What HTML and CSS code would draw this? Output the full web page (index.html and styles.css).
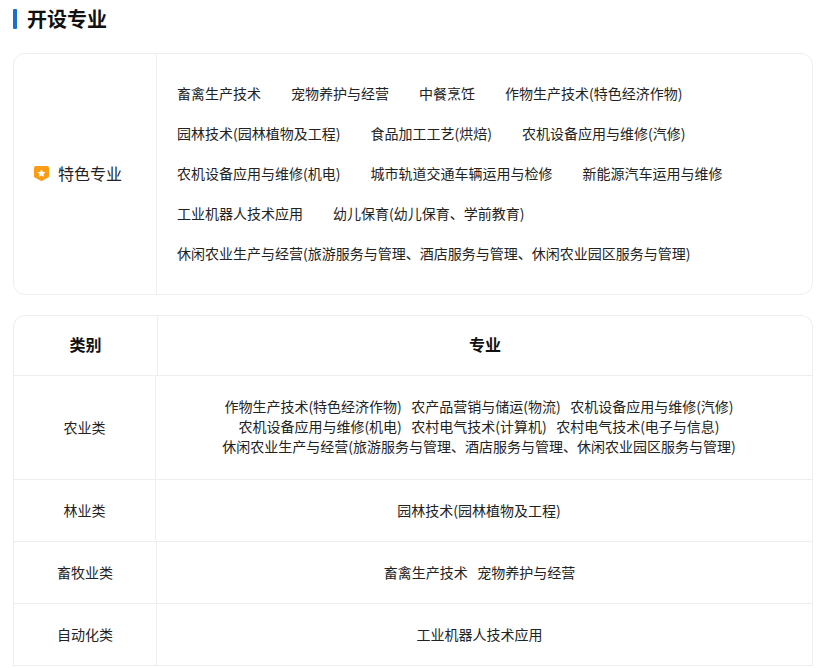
FILE: index.html
```html
<!DOCTYPE html>
<html lang="zh-CN">
<head>
<meta charset="utf-8">
<title>开设专业</title>
<link rel="stylesheet" href="styles.css">
</head>
<body>
<h2 class="title">开设专业</h2>
<section class="feature">
  <div class="feature-label">
    <svg class="badge" width="15" height="15" viewBox="0 0 15 15"><path d="M2 0h11a2 2 0 0 1 2 2v8.500a1 1 0 0 1-.5.850l-6.200 3.400a1.600 1.600 0 0 1-1.600 0L.5 11.350A1 1 0 0 1 0 10.500V2a2 2 0 0 1 2-2z" fill="#fa9d14"/><path d="M7.500 3.200l1.250 2.550 2.800.4-2.050 1.950.5 2.800-2.500-1.350L5 10.900l.5-2.800-2.050-1.950 2.800-.4z" fill="#fff"/></svg>
    <span>特色专业</span>
  </div>
  <div class="feature-list">
    <div class="feature-row"><span>畜禽生产技术</span><span>宠物养护与经营</span><span>中餐烹饪</span><span>作物生产技术(特色经济作物)</span></div>
    <div class="feature-row"><span>园林技术(园林植物及工程)</span><span>食品加工工艺(烘焙)</span><span>农机设备应用与维修(汽修)</span></div>
    <div class="feature-row"><span>农机设备应用与维修(机电)</span><span>城市轨道交通车辆运用与检修</span><span>新能源汽车运用与维修</span></div>
    <div class="feature-row"><span>工业机器人技术应用</span><span>幼儿保育(幼儿保育、学前教育)</span></div>
    <div class="feature-row"><span>休闲农业生产与经营(旅游服务与管理、酒店服务与管理、休闲农业园区服务与管理)</span></div>
  </div>
</section>
<section class="table">
  <div class="row head"><div class="cat">类别</div><div class="majors">专业</div></div>
  <div class="row tall narrow"><div class="cat">农业类</div><div class="majors">
    <div>作物生产技术(特色经济作物)&nbsp;&nbsp;&nbsp;农产品营销与储运(物流)&nbsp;&nbsp;&nbsp;农机设备应用与维修(汽修)</div>
    <div>农机设备应用与维修(机电)&nbsp;&nbsp;&nbsp;农村电气技术(计算机)&nbsp;&nbsp;&nbsp;农村电气技术(电子与信息)</div>
    <div>休闲农业生产与经营(旅游服务与管理、酒店服务与管理、休闲农业园区服务与管理)</div>
  </div></div>
  <div class="row narrow"><div class="cat">林业类</div><div class="majors">园林技术(园林植物及工程)</div></div>
  <div class="row"><div class="cat">畜牧业类</div><div class="majors">畜禽生产技术&nbsp;&nbsp;&nbsp;宠物养护与经营</div></div>
  <div class="row"><div class="cat">自动化类</div><div class="majors">工业机器人技术应用</div></div>
</section>
</body>
</html>
```
FILE: styles.css
```css
* { box-sizing: border-box; }
html, body { overflow: hidden; height: 668px; }
body {
  margin: 0;
  padding: 0 12px 0 13px;
  background: #fff;
  color: #222;
  font-family: "Noto Sans CJK SC", "Liberation Sans", sans-serif;
  font-size: 14px;
}
.title {
  margin: 9px 0 24px;
  height: 20px;
  padding-left: 14px;
  font-size: 20px;
  line-height: 20px;
  font-weight: 700;
  color: #111;
  position: relative;
}
.title::before {
  content: "";
  position: absolute;
  left: 0;
  top: 0;
  width: 4px;
  height: 20px;
  border-radius: 1px;
  background: #1a6fd0;
}
.feature {
  display: flex;
  height: 242px;
  border: 1px solid #eeeeee;
  border-radius: 12px;
}
.feature-label {
  width: 143px;
  flex: none;
  border-right: 1px solid #eeeeee;
  display: flex;
  align-items: center;
  padding: 0 0 2px 20px;
  gap: 9px;
  font-size: 16px;
}
.badge { flex: none; }
.feature-list {
  flex: 1;
  padding: 19px 0 0 20px;
}
.feature-row {
  display: flex;
  gap: 30px;
  height: 40px;
  line-height: 40px;
  white-space: nowrap;
}
.table {
  margin-top: 20px;
  height: 351px;
  border: 1px solid #eeeeee;
  border-bottom: 0;
  border-radius: 12px 12px 0 0;
}
.row {
  display: grid;
  grid-template-columns: 143px 1fr;
  height: 62px;
  border-bottom: 1px solid #eeeeee;
  text-align: center;
}
.narrow { grid-template-columns: 142px 1fr; }
.tall { height: 104px; }
.head {
  height: 60px;
  grid-template-columns: 144px 1fr;
  font-size: 16px;
  font-weight: 700;
  color: #111;
}
.cat, .majors {
  display: flex;
  flex-direction: column;
  justify-content: center;
  line-height: 20px;
  padding-bottom: 2px;
}
.majors { padding-right: 10px; }
.tall .majors, .head .cat, .head .majors { padding-bottom: 4px; }
.head .majors { padding-right: 0; }
.cat { border-right: 1px solid #eeeeee; }
```
